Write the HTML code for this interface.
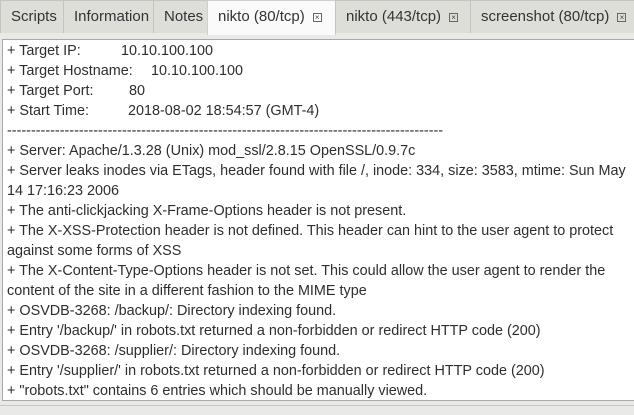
<!DOCTYPE html>
<html><head><style>
*{margin:0;padding:0;box-sizing:border-box}
body{width:634px;height:415px;background:#e9e9e7;font-family:"Liberation Sans",sans-serif;font-size:14.4px;color:#2e2e2e;position:relative;overflow:hidden}
.tab{position:absolute;top:0;height:33px;border:1px solid #c4c4c0;border-bottom:none;background:#deded9;line-height:31px;padding-left:10px;white-space:nowrap;color:#333;font-size:15px}
.tab.a{background:#fafafa;height:35px;border-color:#cfcfcb}
.x{display:inline-block;width:9px;height:9px;border:1px solid #666;font-size:8px;line-height:7px;text-align:center;vertical-align:middle;margin-left:8px;color:#444}
.box{position:absolute;left:2px;top:39px;width:640px;height:362px;background:#fff;border:1px solid #a9a9a5;overflow:hidden}
.l{position:absolute;left:4px;white-space:pre;line-height:20px}
.v{position:absolute;white-space:pre;line-height:20px}
.bot{position:absolute;left:0;top:405px;width:634px;height:1px;background:#c8c8c4}
</style></head><body>
<div class="tab" style="left:0;width:64px">Scripts</div>
<div class="tab" style="left:63px;width:91px">Information</div>
<div class="tab" style="left:153px;width:55px">Notes</div>
<div class="tab a" style="left:207px;width:129px">nikto (80/tcp)<span class="x">×</span></div>
<div class="tab" style="left:335px;width:136px">nikto (443/tcp)<span class="x">×</span></div>
<div class="tab" style="left:470px;width:170px">screenshot (80/tcp)<span class="x">×</span></div>
<div class="box">
<div class="l" style="top:1px">+ Target IP:</div><div class="v" style="top:1px;left:118px">10.10.100.100</div>
<div class="l" style="top:21px">+ Target Hostname:</div><div class="v" style="top:21px;left:148px">10.10.100.100</div>
<div class="l" style="top:41px">+ Target Port:</div><div class="v" style="top:41px;left:126px">80</div>
<div class="l" style="top:61px">+ Start Time:</div><div class="v" style="top:61px;left:125px">2018-08-02 18:54:57 (GMT-4)</div>
<div class="l" style="top:81px">-------------------------------------------------------------------------------------------</div>
<div class="l" style="top:101px">+ Server: Apache/1.3.28 (Unix) mod_ssl/2.8.15 OpenSSL/0.9.7c</div>
<div class="l" style="top:121px">+ Server leaks inodes via ETags, header found with file /, inode: 334, size: 3583, mtime: Sun May</div>
<div class="l" style="top:141px">14 17:16:23 2006</div>
<div class="l" style="top:161px">+ The anti-clickjacking X-Frame-Options header is not present.</div>
<div class="l" style="top:181px">+ The X-XSS-Protection header is not defined. This header can hint to the user agent to protect</div>
<div class="l" style="top:201px">against some forms of XSS</div>
<div class="l" style="top:221px">+ The X-Content-Type-Options header is not set. This could allow the user agent to render the</div>
<div class="l" style="top:241px">content of the site in a different fashion to the MIME type</div>
<div class="l" style="top:261px">+ OSVDB-3268: /backup/: Directory indexing found.</div>
<div class="l" style="top:281px">+ Entry '/backup/' in robots.txt returned a non-forbidden or redirect HTTP code (200)</div>
<div class="l" style="top:301px">+ OSVDB-3268: /supplier/: Directory indexing found.</div>
<div class="l" style="top:321px">+ Entry '/supplier/' in robots.txt returned a non-forbidden or redirect HTTP code (200)</div>
<div class="l" style="top:341px">+ "robots.txt" contains 6 entries which should be manually viewed.</div>
</div>
<div class="bot"></div>
</body></html>
